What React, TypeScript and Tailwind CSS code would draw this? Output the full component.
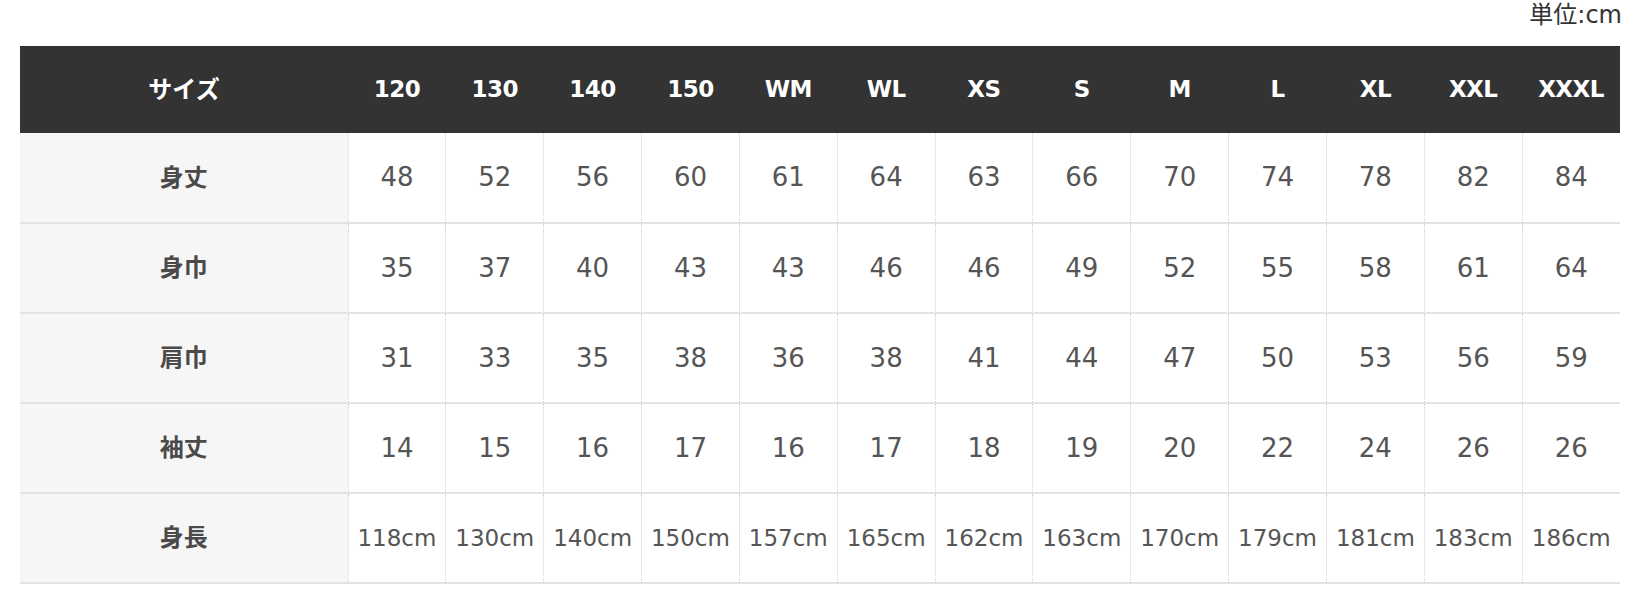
const sizes = ['120', '130', '140', '150', 'WM', 'WL', 'XS', 'S', 'M', 'L', 'XL', 'XXL', 'XXXL'];

const rows: { label: string; values: string[]; small?: boolean }[] = [
  { label: '身丈', values: ['48', '52', '56', '60', '61', '64', '63', '66', '70', '74', '78', '82', '84'] },
  { label: '身巾', values: ['35', '37', '40', '43', '43', '46', '46', '49', '52', '55', '58', '61', '64'] },
  { label: '肩巾', values: ['31', '33', '35', '38', '36', '38', '41', '44', '47', '50', '53', '56', '59'] },
  { label: '袖丈', values: ['14', '15', '16', '17', '16', '17', '18', '19', '20', '22', '24', '26', '26'] },
  {
    label: '身長',
    values: ['118cm', '130cm', '140cm', '150cm', '157cm', '165cm', '162cm', '163cm', '170cm', '179cm', '181cm', '183cm', '186cm'],
    small: true,
  },
];

export default function App() {
  return (
    <div
      className="min-h-[596px] bg-white pl-5 pr-[22px]"
      style={{ fontFamily: '"DejaVu Sans", "Noto Sans CJK JP", sans-serif' }}
    >
      {/* 単位 */}
      <div className="flex h-[46px] justify-end text-[24px] leading-[30px] text-[#333]">
        <span className="-mr-[2px]">単位:cm</span>
      </div>

      <table className="w-full table-fixed border-collapse">
        <colgroup>
          <col className="w-[328px]" />
          {sizes.map((s) => (
            <col key={s} />
          ))}
        </colgroup>
        <thead>
          <tr className="h-[87px] bg-[#333333] text-white">
            <th className="text-[24px] font-bold">サイズ</th>
            {sizes.map((s) => (
              <th key={s} className="text-[23px] font-bold tracking-[-0.5px]">
                {s}
              </th>
            ))}
          </tr>
        </thead>
        <tbody>
          {rows.map((row) => (
            <tr key={row.label} className="h-[90px] border-b-2 border-[#e3e3e3]">
              <th className="bg-[#f6f6f6] text-[24px] font-bold text-[#4a4a4a]">{row.label}</th>
              {row.values.map((v, i) => (
                <td
                  key={i}
                  className={
                    row.small
                      ? 'border-l border-dotted border-l-[#d0d0d0] text-center text-[23px] text-[#555]'
                      : 'border-l border-dotted border-l-[#d0d0d0] text-center text-[26px] text-[#555]'
                  }
                >
                  {v}
                </td>
              ))}
            </tr>
          ))}
        </tbody>
      </table>
    </div>
  );
}
